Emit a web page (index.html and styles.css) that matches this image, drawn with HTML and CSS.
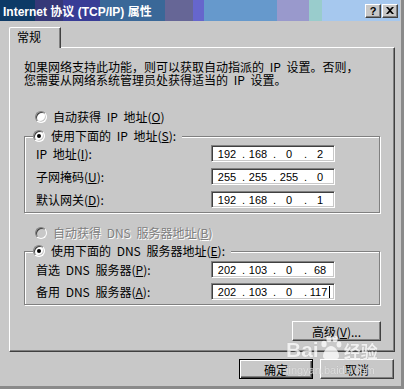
FILE: index.html
```html
<!DOCTYPE html>
<html lang="zh-CN">

<head>
    <meta charset="UTF-8">
    <title>Internet 协议 (TCP/IP) 属性</title>
    <link rel="stylesheet" href="styles.css">
</head>

<body>
    <div class="window">
        <div class="titlebar">
            <span class="title">Internet 协议 (TCP/IP) 属性</span>
            <div class="captionBtns">
                <span class="cbtn help">?</span>
                <span class="cbtn">
                    <svg width="8" height="7" viewBox="0 0 8 7"><path d="M0 0h2l2 2 2-2h2L5 3.5 8 7H6L4 5 2 7H0l3-3.5z" fill="#000"/></svg>
                </span>
            </div>
        </div>

        <div class="tabs">
            <div class="tab">常规</div>
        </div>

        <div class="panel">
            <p class="intro">如果网络支持此功能，则可以获取自动指派的 IP 设置。否则，<br>您需要从网络系统管理员处获得适当的 IP 设置。</p>

            <div class="option">
                <span class="radio"></span>
                <span>自动获得 IP 地址(<u>O</u>)</span>
            </div>

            <fieldset class="group">
                <legend><span class="radio checked"></span><span>使用下面的 IP 地址(<u>S</u>):</span></legend>
                <div class="row">
                    <span class="label">IP 地址(<u>I</u>):</span>
                    <div class="ipbox"><span class="octet">192</span><span class="dot">.</span><span class="octet">168</span><span class="dot">.</span><span class="octet">0</span><span class="dot">.</span><span class="octet">2</span></div>
                </div>
                <div class="row">
                    <span class="label">子网掩码(<u>U</u>):</span>
                    <div class="ipbox"><span class="octet">255</span><span class="dot">.</span><span class="octet">255</span><span class="dot">.</span><span class="octet">255</span><span class="dot">.</span><span class="octet">0</span></div>
                </div>
                <div class="row">
                    <span class="label">默认网关(<u>D</u>):</span>
                    <div class="ipbox"><span class="octet">192</span><span class="dot">.</span><span class="octet">168</span><span class="dot">.</span><span class="octet">0</span><span class="dot">.</span><span class="octet">1</span></div>
                </div>
            </fieldset>

            <div class="option disabled">
                <span class="radio"></span>
                <span>自动获得 DNS 服务器地址(<u>B</u>)</span>
            </div>

            <fieldset class="group dns">
                <legend><span class="radio checked"></span><span>使用下面的 DNS 服务器地址(<u>E</u>):</span></legend>
                <div class="row">
                    <span class="label">首选 DNS 服务器(<u>P</u>):</span>
                    <div class="ipbox"><span class="octet">202</span><span class="dot">.</span><span class="octet">103</span><span class="dot">.</span><span class="octet">0</span><span class="dot">.</span><span class="octet">68</span></div>
                </div>
                <div class="row">
                    <span class="label">备用 DNS 服务器(<u>A</u>):</span>
                    <div class="ipbox"><span class="octet">202</span><span class="dot">.</span><span class="octet">103</span><span class="dot">.</span><span class="octet">0</span><span class="dot">.</span><span class="octet">117<i class="caret"></i></span></div>
                </div>
            </fieldset>

            <div class="advRow">
                <button class="btn adv">高级(<u>V</u>)...</button>
            </div>
        </div>

        <div class="footer">
            <button class="btn default">确定</button>
            <button class="btn">取消</button>
        </div>

        <!-- watermark from the source screenshot -->
        <div class="watermark">
            <div class="wmTop">
                <span class="wmBai">Bai</span>
                <svg class="paw" width="24" height="26" viewBox="0 0 24 26">
                    <ellipse cx="5" cy="9" rx="2.6" ry="3.2" fill="#fff"/>
                    <ellipse cx="10" cy="4" rx="2.6" ry="3.2" fill="#fff"/>
                    <ellipse cx="16" cy="4" rx="2.6" ry="3.2" fill="#fff"/>
                    <ellipse cx="20" cy="9.5" rx="2.4" ry="3" fill="#fff"/>
                    <path d="M12 11c-4 0-8 6-8 10 0 3 3 4 8 4s8-1 8-4c0-4-4-10-8-10z" fill="#fff"/>
                </svg>
                <span class="wmJy">经验</span>
            </div>
            <div class="wmUrl">jingyan.baidu.com</div>
        </div>
    </div>
</body>

</html>
```

FILE: styles.css
```css
* {
    box-sizing: border-box;
}

body {
    margin: 0;
    background: #c8c8c8;
    font: 12px "Noto Sans CJK SC", "Liberation Sans", sans-serif;
    color: #000;
}

u {
    text-decoration: underline;
}

.window {
    position: relative;
    width: 404px;
    height: 389px;
    background: #c8c8c8;
    border-right: 3px solid #8a8a8a;
    border-bottom: 3px solid #8a8a8a;
    overflow: hidden;
}

/* title bar */
.titlebar {
    height: 21px;
    margin-right: 1px;
    padding: 0 2px 0 3px;
    display: flex;
    align-items: center;
    justify-content: space-between;
    background: linear-gradient(to right,
            #0d3a66 0 35px, #363878 35px 63px, #383c96 63px 100px,
            #3a6898 100px 165px, #666696 165px 193px, #6666cc 193px 204px,
            #6699cc 204px 277px, #9999cc 277px 309px, #99cccc 309px 322px,
            #a6c8ee 322px);
}

.title {
    color: #fff;
    font: bold 12px "Liberation Sans", "Noto Sans CJK SC", sans-serif;
    white-space: nowrap;
}

.captionBtns {
    display: flex;
    gap: 1px;
}

.cbtn {
    width: 16px;
    height: 14px;
    display: flex;
    align-items: center;
    justify-content: center;
    background: #c8c8c8;
    border: 1px solid;
    border-color: #fff #404040 #404040 #fff;
    box-shadow: inset -1px -1px #808080;
}

.cbtn.help {
    font: bold 11px "Liberation Sans", sans-serif;
    padding-top: 1px;
}

/* tab strip */
.tabs {
    display: flex;
    padding: 6px 0 0 9px;
}

.tab {
    position: relative;
    z-index: 1;
    width: 52px;
    height: 21px;
    margin-bottom: -1px;
    padding: 2px 0 0 7px;
    line-height: 14px;
    background: #c8c8c8;
    border-top: 1px solid #fff;
    border-left: 1px solid #fff;
    border-right: 1px solid #404040;
    border-top-left-radius: 2px;
    box-shadow: inset -1px 0 #808080;
}

.panel {
    width: 386px;
    height: 305px;
    margin-left: 9px;
    padding: 12px 0 0 14px;
    border-top: 1px solid #fff;
    border-left: 1px solid #fff;
    border-right: 1px solid #404040;
    border-bottom: 1px solid #404040;
    box-shadow: inset -1px -1px #808080;
    word-spacing: 3px;
}

.intro {
    margin: 0;
    line-height: 13px;
    white-space: nowrap;
}

.option {
    display: flex;
    align-items: center;
    gap: 6px;
    height: 14px;
    line-height: 14px;
    margin: 24px 0 0 11px;
}

.option.disabled {
    margin-top: 13px;
    color: #808080;
    text-shadow: 1px 1px #fff;
}

.radio {
    position: relative;
    flex: none;
    width: 12px;
    height: 12px;
    border-radius: 50%;
    background: #fff;
    border: 1px solid;
    border-color: #808080 #fff #fff #808080;
    box-shadow: inset 1px 1px #404040, inset -1px -1px #c8c8c8;
}

.disabled .radio {
    background: #c8c8c8;
}

.radio.checked::after {
    content: "";
    position: absolute;
    left: 3px;
    top: 3px;
    width: 4px;
    height: 4px;
    border-radius: 50%;
    background: #000;
}

/* group boxes */
.group {
    width: 356px;
    margin: 5px 0 0;
    padding: 2px 0 4px 11px;
    border: 1px solid #808080;
    box-shadow: inset 1px 1px #fff, 1px 1px #fff;
}

.group.dns {
    margin-top: 4px;
    padding-top: 3px;
}

.group legend {
    display: flex;
    align-items: center;
    gap: 6px;
    height: 14px;
    line-height: 14px;
    margin-left: -3px;
    padding: 0 6px 0 0;
    background: #c8c8c8;
}

.row {
    display: flex;
    align-items: center;
    height: 17px;
}

.row + .row {
    margin-top: 5px;
}

.group:first-of-type .row + .row {
    margin-top: 6px;
}

.label {
    width: 175px;
    white-space: nowrap;
}

.ipbox {
    width: 124px;
    height: 17px;
    display: flex;
    align-items: center;
    padding-left: 2px;
    background: #fff;
    border: 1px solid;
    border-color: #808080 #fff #fff #808080;
    box-shadow: inset 1px 1px #404040, inset -1px -1px #c8c8c8;
    font: 11px "Liberation Sans", sans-serif;
    word-spacing: 0;
}

.octet {
    width: 26px;
    text-align: center;
}

.dot {
    width: 5px;
    text-align: right;
}

.caret {
    display: inline-block;
    width: 1px;
    height: 12px;
    margin-left: 2px;
    background: #000;
    vertical-align: -2px;
}

/* buttons */
.btn {
    height: 20px;
    padding: 0;
    background: #c8c8c8;
    font: 12px "Noto Sans CJK SC", "Liberation Sans", sans-serif;
    color: #000;
    border: 1px solid;
    border-color: #fff #404040 #404040 #fff;
    box-shadow: inset -1px -1px #808080;
}

.btn.default {
    border-color: #000;
    box-shadow: inset 1px 1px #fff, inset -1px -1px #404040, inset -2px -2px #808080;
}

.advRow {
    display: flex;
    justify-content: flex-end;
    width: 357px;
    margin-top: 16px;
}

.btn.adv {
    width: 89px;
    word-spacing: 0;
}

.footer {
    display: flex;
    justify-content: flex-end;
    gap: 7px;
    padding: 7px 7px 0 0;
}

.footer .btn {
    width: 74px;
}

/* faint watermark over the lower right corner */
.watermark {
    position: absolute;
    left: 286px;
    top: 331px;
    width: 92px;
    opacity: 0.75;
    color: #fff;
    text-shadow: 0 0 1px #999;
    pointer-events: none;
}

.wmTop {
    display: flex;
    align-items: flex-end;
    height: 30px;
}

.wmBai {
    font: bold 21px "Liberation Sans", sans-serif;
    line-height: 22px;
}

.paw {
    margin: 0 1px 0 0;
}

.wmJy {
    font: bold 17px "Noto Sans CJK SC", sans-serif;
    line-height: 20px;
}

.wmUrl {
    font: 11px "Liberation Sans", sans-serif;
    line-height: 12px;
    margin-top: 3px;
    color: #e8e8e8;
}
```
